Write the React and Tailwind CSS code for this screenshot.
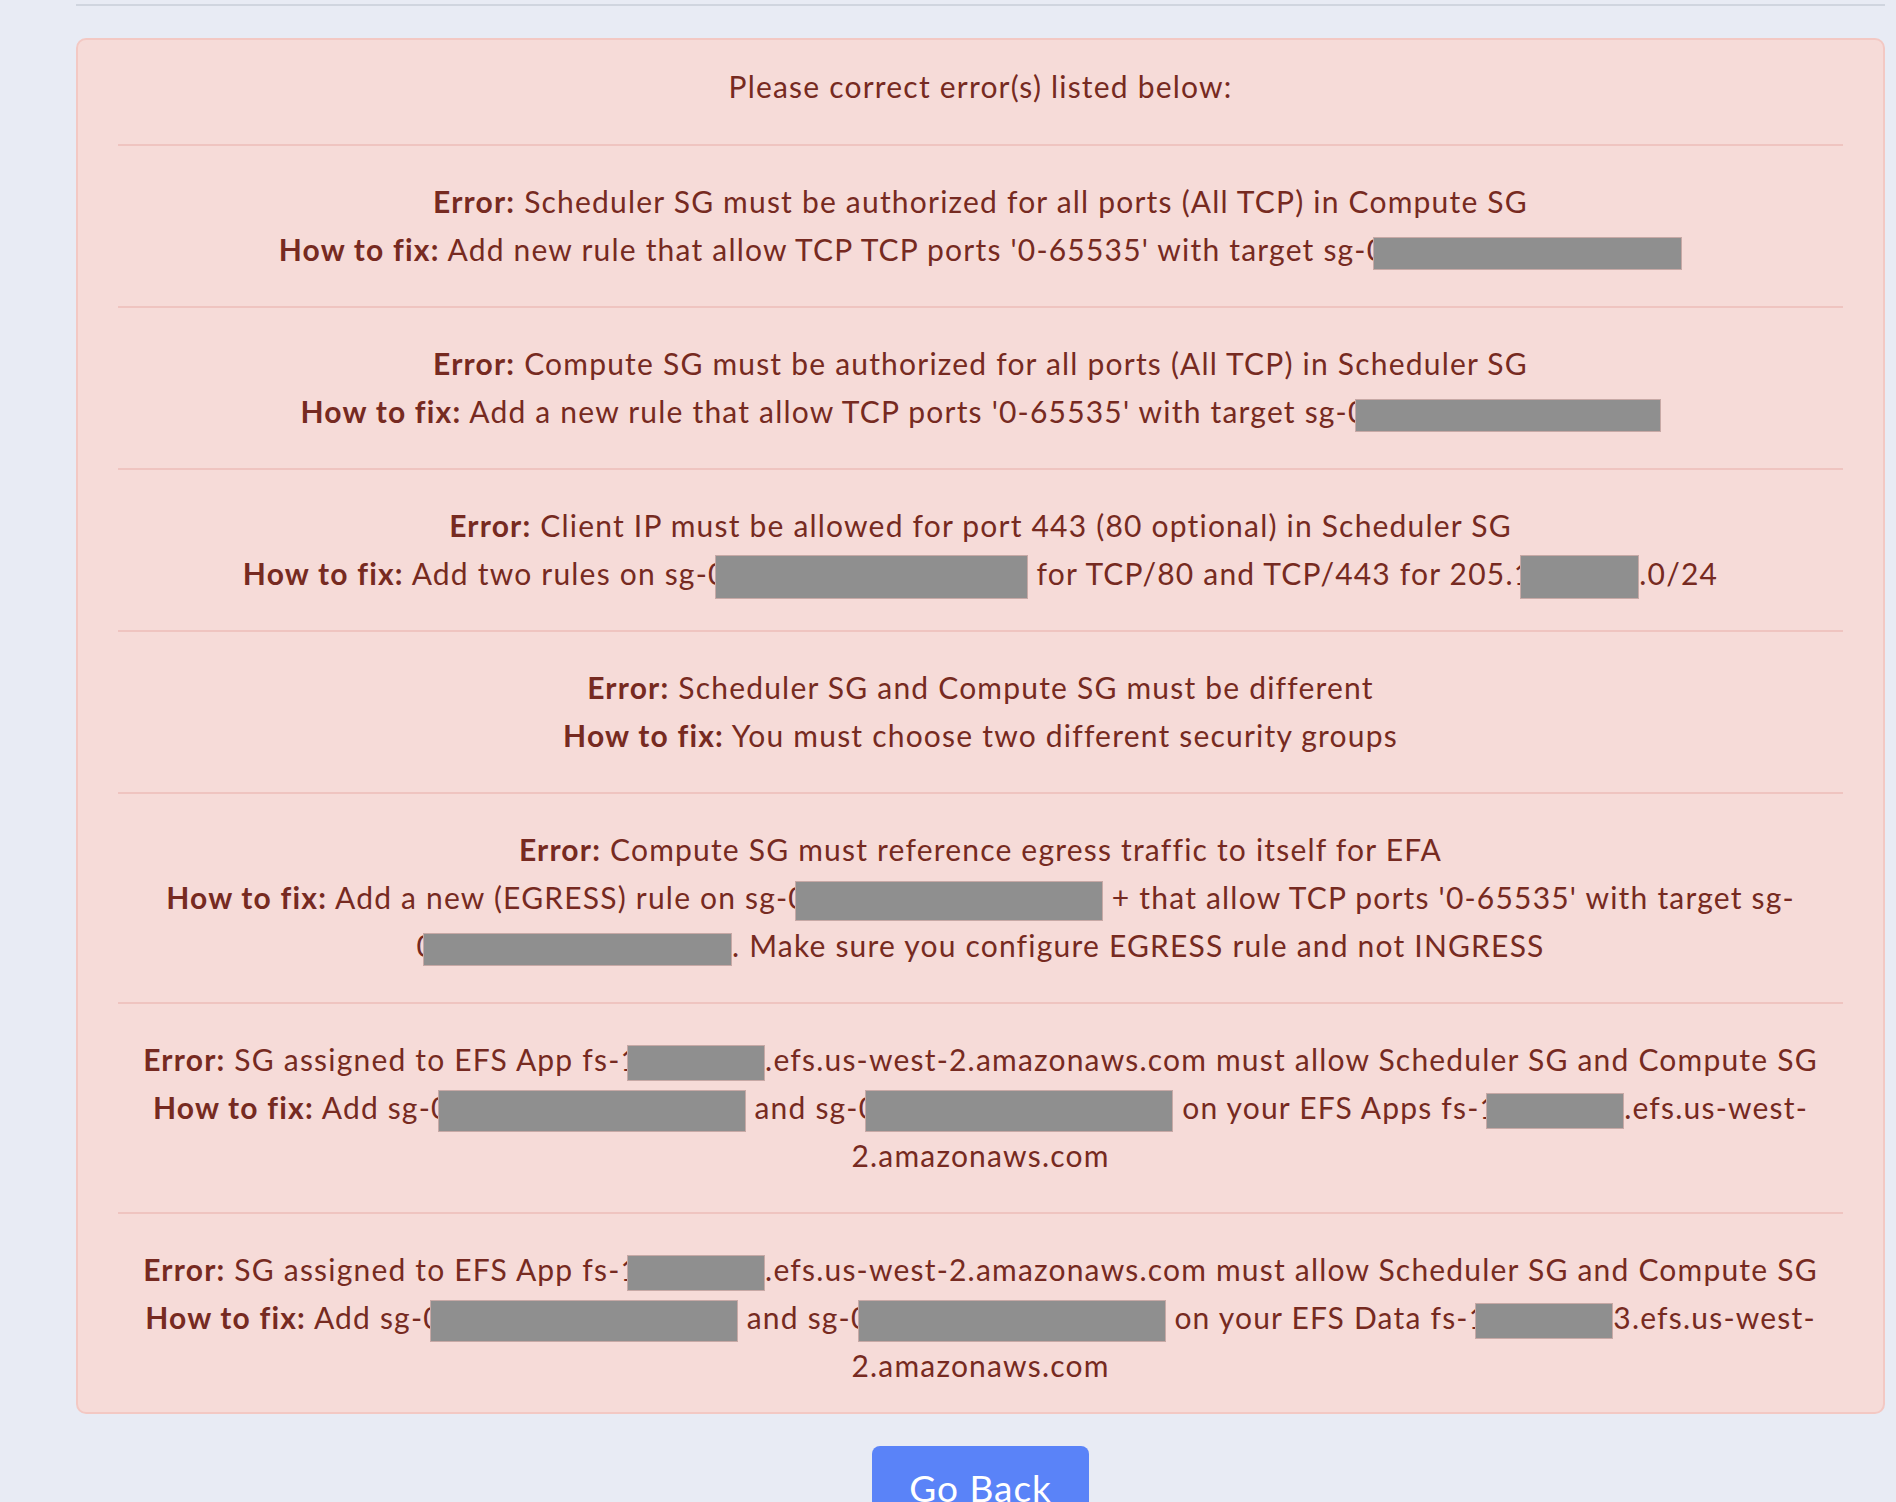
import React from "react";

function R({ c, w, h = "h-[33px]", m = "" }) {
  return (
    <span className="whitespace-nowrap">
      {c}
      <span
        className={`inline-block align-middle -ml-[12px] -my-[8px] bg-[#8f8f8f] border border-[#c7a9a6] ${h} ${m}`}
        style={{ width: w }}
      />
    </span>
  );
}

function Row({ children, last }) {
  return (
    <div className={`border-t-2 border-[#efc4c0] pt-[31px] ${last ? "pb-0" : "pb-[33px]"}`}>
      <p className="text-center">{children}</p>
    </div>
  );
}

const B = ({ children }) => <strong className="font-bold">{children}</strong>;

export default function App() {
  return (
    <div
      className="min-h-[1502px] bg-[#e8ebf4] pl-[76px] pr-[11px] pt-[4px] text-[#762a21]"
      style={{ fontFamily: "Lato, 'Open Sans', sans-serif" }}
    >
      <div className="h-[2px] bg-[#d0d5df]" />
      <div className="mt-[32px] rounded-[10px] border-2 border-[#f3c8c3] bg-[#f6dbd8] px-[40px] pt-[22px] pb-[23px] text-[30px] leading-[48px] tracking-[1.2px]">
        <div className="text-center pb-[34px]">Please correct error(s) listed below:</div>
        <Row>
          <B>Error:</B> Scheduler SG must be authorized for all ports (All TCP) in Compute SG
          <br />
          <B>How to fix:</B> Add new rule that allow TCP TCP ports '0-65535' with target sg-
          <R c="0" w="309px" />
        </Row>
        <Row>
          <B>Error:</B> Compute SG must be authorized for all ports (All TCP) in Scheduler SG
          <br />
          <B>How to fix:</B> Add a new rule that allow TCP ports '0-65535' with target sg-
          <R c="0" w="306px" />
        </Row>
        <Row>
          <B>Error:</B> Client IP must be allowed for port 443 (80 optional) in Scheduler SG
          <br />
          <B>How to fix:</B> Add two rules on sg-
          <R c="0" w="313px" h="h-[44px]" /> for TCP/80 and TCP/443 for 205.
          <R c="1" w="119px" h="h-[44px]" />
          .0/24
        </Row>
        <Row>
          <B>Error:</B> Scheduler SG and Compute SG must be different
          <br />
          <B>How to fix:</B> You must choose two different security groups
        </Row>
        <Row>
          <B>Error:</B> Compute SG must reference egress traffic to itself for EFA
          <br />
          <B>How to fix:</B> Add a new (EGRESS) rule on sg-
          <R c="0" w="308px" h="h-[40px]" /> + that allow TCP ports '0-65535' with target sg-
          <R c="0" w="309px" />. Make sure you configure EGRESS rule and not INGRESS
        </Row>
        <Row>
          <B>Error:</B> SG assigned to EFS App fs-
          <R c="1" w="138px" h="h-[36px]" />
          .efs.us-west-2.amazonaws.com must allow Scheduler SG and Compute SG
          <br />
          <B>How to fix:</B> Add sg-
          <R c="0" w="308px" h="h-[42px]" /> and sg-
          <R c="0" w="308px" h="h-[42px]" /> on your EFS Apps fs-
          <R c="1" w="138px" h="h-[36px]" />
          .efs.us-west-2.amazonaws.com
        </Row>
        <Row last>
          <B>Error:</B> SG assigned to EFS App fs-
          <R c="1" w="138px" h="h-[36px]" />
          .efs.us-west-2.amazonaws.com must allow Scheduler SG and Compute SG
          <br />
          <B>How to fix:</B> Add sg-
          <R c="0" w="308px" h="h-[42px]" /> and sg-
          <R c="0" w="308px" h="h-[42px]" /> on your EFS Data fs-
          <R c="1" w="138px" h="h-[36px]" />
          3.efs.us-west-2.amazonaws.com
        </Row>
      </div>
      <div className="mt-[32px] flex justify-center">
        <button className="rounded-[8px] bg-[#5a83f8] px-[37px] py-[14px] text-[37px] leading-[56px] text-white tracking-[1px]">
          Go Back
        </button>
      </div>
    </div>
  );
}
